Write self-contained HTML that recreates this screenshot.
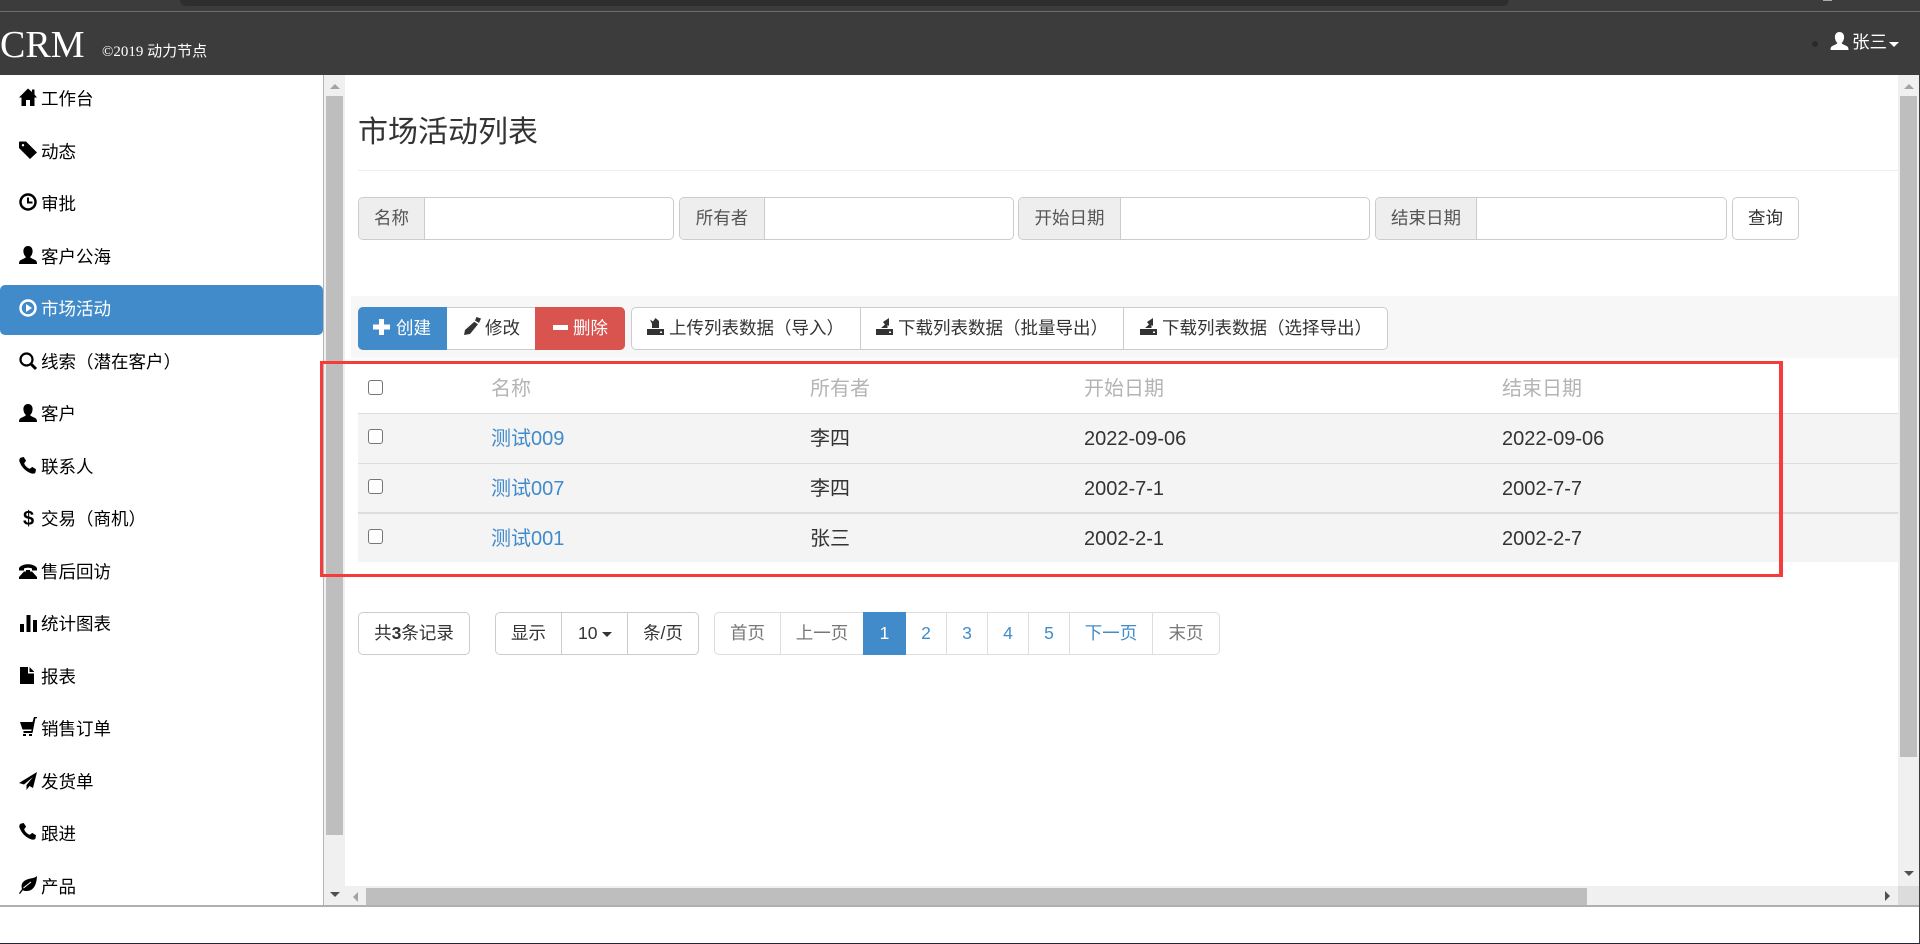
<!DOCTYPE html>
<html lang="zh"><head><meta charset="utf-8"><title>市场活动列表</title>
<style>
html,body{margin:0;padding:0;width:1920px;height:944px;overflow:hidden;background:#fff}
body{position:relative;font-family:"Liberation Sans","Noto Sans CJK SC",sans-serif;font-size:17.5px;color:#333}
.a{position:absolute;box-sizing:border-box}
.t{position:absolute;white-space:nowrap;line-height:24px;height:24px}
.n{position:absolute;left:41px;color:#000;white-space:nowrap;line-height:24px;height:24px}
svg{position:absolute;display:block;overflow:visible}
.g{position:absolute;box-sizing:border-box;border:1px solid #ccc;border-radius:5px;background:#fff}
.ad{position:absolute;left:0;top:0;bottom:0;background:#eee;border-right:1px solid #ccc;border-radius:4px 0 0 4px;color:#555;text-align:center;line-height:41px}
.d{position:absolute;top:0;bottom:0;width:1px;background:#ccc}
.th{position:absolute;font-size:20px;color:#b4b4b4;line-height:26px;white-space:nowrap}
.td{position:absolute;font-size:20px;color:#333;line-height:26px;white-space:nowrap}
.lk{color:#428bca}
.cb{position:absolute;left:368px;width:15px;height:15px;box-sizing:border-box;border:1.5px solid #767676;border-radius:3px;background:#fff}
.p{position:absolute;top:0;height:41px;line-height:41px;text-align:center;color:#777;box-sizing:border-box}
.b{color:#428bca}
</style></head><body>
<svg width="0" height="0" style="position:absolute"><defs>
<symbol id="user" viewBox="0 0 18 18"><path d="M9 0c3 0 4.600 2.300 4.600 5 0 2.500-1 4.700-2.500 6 .3 1 3 2 5 3 1.500.8 1.900 2 1.900 4H0c0-2 .4-3.200 1.900-4 2-1 4.700-2 5-3C5.400 9.700 4.400 7.500 4.400 5 4.400 2.300 6 0 9 0z"/></symbol>
<symbol id="phone" viewBox="0 0 18 18"><path d="M2 .6 5 0l2.500 4-2 2.500c.5 2.500 3.500 5.500 6 6l2.500-2 4 2.500-.5 3c-.5 2-3.500 2-5.500 1C7 15 3 11 1 6 0 4 0 1.600 2 .6z"/></symbol>
<symbol id="imp" viewBox="0 0 17 17"><path d="M0 11h17v6H0zM5 10V6L3 1.500l3 2L8.500 0 12 3v7z"/><path fill="#fff" d="M13 13.500h2v1.500h-2z"/></symbol>
<symbol id="exp" viewBox="0 0 17 17"><path d="M0 11h17v6H0zM5 10l4-3.500L7 4l6-4v8l-1.500-1v3z"/><path fill="#fff" d="M13 13.500h2v1.500h-2z"/></symbol>
</defs></svg>

<!-- header -->
<div class="a" style="left:0;top:0;width:1920px;height:75px;background:#3c3c3c"></div>
<div class="a" style="left:180px;top:0;width:1329px;height:6px;background:#2e2e2e;border-radius:0 0 6px 6px"></div>
<div class="a" style="left:1823px;top:0;width:9px;height:1px;background:#aaa"></div>
<div class="a" style="left:0;top:11px;width:1920px;height:1px;background:#6e6e6e"></div>
<div class="t" style="left:0;top:24px;height:42px;line-height:42px;font-family:'Liberation Serif','Noto Serif CJK SC',serif;font-size:38px;color:#fff">CRM</div>
<div class="t" style="left:102px;top:40px;font-family:'Liberation Serif','Noto Sans CJK SC',serif;font-size:15px;color:#fff">©2019 动力节点</div>
<div class="a" style="left:1812px;top:41px;width:6px;height:6px;border-radius:50%;background:#2a2a2a"></div>
<svg style="left:1830px;top:32px" width="19" height="18" fill="#fff"><use href="#user"/></svg>
<div class="t" style="left:1852px;top:30px;color:#fff">张三</div>
<div class="a" style="left:1889px;top:42px;width:0;height:0;border:5px solid transparent;border-top:5px solid #fff;border-bottom:0"></div>

<!-- sidebar -->
<div class="a" style="left:0;top:285px;width:323px;height:50px;background:#428bca;border-radius:5px"></div>
<svg style="left:19px;top:88px" width="18" height="18" viewBox="0 0 18 18"><path d="M9 0.500 13 4V1.500h2.500V6.500L18 9.500H15.500V18H11V12H7V18H2.500V9.500H0z"/></svg>
<div class="n" style="top:87px">工作台</div>
<svg style="left:19px;top:141px" width="18" height="18" viewBox="0 0 18 18"><path fill-rule="evenodd" d="M1 0.500H7L18 11.500 11 18 0 7V1.500A1 1 0 0 1 1 .5zM4 3a1.200 1.200 0 1 0 .01 0z"/></svg>
<div class="n" style="top:140px">动态</div>
<svg style="left:19px;top:193px" width="18" height="18" viewBox="0 0 18 18"><circle cx="9" cy="9" r="7.500" fill="none" stroke="#000" stroke-width="2.500"/><path d="M9 4.500V9.500H13.500" fill="none" stroke="#000" stroke-width="2"/></svg>
<div class="n" style="top:192px">审批</div>
<svg style="left:19px;top:246px" width="18" height="18"><use href="#user"/></svg>
<div class="n" style="top:245px">客户公海</div>
<svg style="left:19px;top:299px" width="18" height="18" viewBox="0 0 18 18"><circle cx="9" cy="9" r="7.500" fill="none" stroke="#fff" stroke-width="2.500"/><path d="M7 5V13L13 9z" fill="#fff"/></svg>
<div class="n" style="top:297px;color:#fff">市场活动</div>
<svg style="left:19px;top:352px" width="18" height="18" viewBox="0 0 18 18"><circle cx="7.500" cy="7.500" r="6" fill="none" stroke="#000" stroke-width="2.200"/><path d="M12 12L17 17" stroke="#000" stroke-width="3"/></svg>
<div class="n" style="top:350px">线索（潜在客户）</div>
<svg style="left:19px;top:404px" width="18" height="18"><use href="#user"/></svg>
<div class="n" style="top:402px">客户</div>
<svg style="left:19px;top:457px" width="17" height="17"><use href="#phone"/></svg>
<div class="n" style="top:455px">联系人</div>
<div class="t" style="left:23px;top:507px;color:#000;font-size:20px;font-weight:700">$</div>
<div class="n" style="top:507px">交易（商机）</div>
<svg style="left:19px;top:563px" width="18" height="16" viewBox="0 0 18 16"><path d="M0 5C3 0 15 0 18 5V7.500H13V5.500C11 4.500 7 4.500 5 5.500V7.500H0zM5 8.500H7V7H11V8.500H13L18 14V16H0V14z"/></svg>
<div class="n" style="top:560px">售后回访</div>
<svg style="left:20px;top:615px" width="17" height="17" viewBox="0 0 17 17"><path d="M0 9H4V17H0zM6.500 0H10.500V17H6.500zM13 5H17V17H13z"/></svg>
<div class="n" style="top:612px">统计图表</div>
<svg style="left:20px;top:667px" width="14" height="17" viewBox="0 0 14 17"><path d="M0 0H8V6.500H14V17H0zM9.500 0L14 4.500V5H9.500z"/></svg>
<div class="n" style="top:665px">报表</div>
<svg style="left:20px;top:717px" width="17" height="19" viewBox="0 0 17 19"><path d="M0 5H12.500L14 0H17V1.200H15.400L12.500 16H3.500V14H11.300L11.700 12.500H2.500zM3 17h3v2H3zM9 17h3v2H9z"/></svg>
<div class="n" style="top:717px">销售订单</div>
<svg style="left:19px;top:772px" width="18" height="18" viewBox="0 0 18 18"><path d="M18 0 0 11l5 1.500L14 5 7.500 13v5l3-4 3.500 2z"/></svg>
<div class="n" style="top:770px">发货单</div>
<svg style="left:19px;top:823px" width="17" height="17"><use href="#phone"/></svg>
<div class="n" style="top:822px">跟进</div>
<svg style="left:19px;top:876px" width="18" height="18" viewBox="0 0 18 18"><path d="M18 0C17.500 10 14 15 7.500 15 5.500 15 4.500 14.600 3.800 14.200L1 18 0 17.300 3 13C1.800 9 3 5.500 8 3.500 12 2 15.500 2.500 18 0z"/><path d="M4.500 12 12 6" stroke="#fff" stroke-width="1"/></svg>
<div class="n" style="top:875px">产品</div>
<div class="a" style="left:323px;top:75px;width:1px;height:830px;background:#b5b5b5"></div>

<!-- left scrollbar -->
<div class="a" style="left:324px;top:75px;width:21px;height:830px;background:#f0f0f0"></div>
<div class="a" style="left:326px;top:96px;width:17px;height:739px;background:#bebebe"></div>
<div class="a" style="left:330px;top:84px;width:0;height:0;border:5px solid transparent;border-bottom:5px solid #a3a3a3;border-top:0"></div>
<div class="a" style="left:330px;top:892px;width:0;height:0;border:5px solid transparent;border-top:5px solid #505050;border-bottom:0"></div>

<!-- title -->
<div class="t" style="left:358px;top:112px;height:42px;line-height:42px;font-size:30px;color:#333">市场活动列表</div>
<div class="a" style="left:358px;top:170px;width:1540px;height:1px;background:#eee"></div>

<!-- search -->
<div class="g" style="left:358px;top:197px;width:316px;height:43px"><div class="ad" style="width:65px">名称</div></div>
<div class="g" style="left:679px;top:197px;width:335px;height:43px"><div class="ad" style="width:84px">所有者</div></div>
<div class="g" style="left:1018px;top:197px;width:352px;height:43px"><div class="ad" style="width:101px">开始日期</div></div>
<div class="g" style="left:1375px;top:197px;width:352px;height:43px"><div class="ad" style="width:100px">结束日期</div></div>
<div class="g" style="left:1732px;top:197px;width:67px;height:43px;text-align:center;line-height:41px">查询</div>

<!-- toolbar -->
<div class="a" style="left:351px;top:296px;width:1547px;height:62px;background:#f7f7f7"></div>
<div class="g" style="left:358px;top:307px;width:267px;height:43px"></div>
<div class="a" style="left:358px;top:307px;width:89px;height:43px;background:#428bca;border-radius:5px 0 0 5px"></div>
<div class="a" style="left:535px;top:307px;width:90px;height:43px;background:#d9534f;border-radius:0 5px 5px 0"></div>
<svg style="left:373px;top:319px" width="17" height="16" viewBox="0 0 17 16"><path fill="#fff" d="M6 0h5v5.500h6v5h-6V16H6v-5.500H0v-5h6z"/></svg>
<div class="t" style="left:396px;top:316px;color:#fff">创建</div>
<svg style="left:463px;top:317px" width="18" height="18" viewBox="0 0 18 18"><path fill="#333" d="M13.500 0 18 1.500 16 6 12 3.500zM11.300 4.800 15 7.200 7 17 1 18 2 13z"/></svg>
<div class="t" style="left:485px;top:316px">修改</div>
<div class="a" style="left:553px;top:325px;width:15px;height:5px;background:#fff"></div>
<div class="t" style="left:573px;top:316px;color:#fff">删除</div>
<div class="g" style="left:631px;top:307px;width:757px;height:43px"></div>
<div class="a" style="left:860px;top:307px;width:1px;height:43px;background:#ccc"></div>
<div class="a" style="left:1123px;top:307px;width:1px;height:43px;background:#ccc"></div>
<svg style="left:647px;top:318px" width="17" height="17" fill="#333"><use href="#imp"/></svg>
<div class="t" style="left:669px;top:316px">上传列表数据（导入）</div>
<svg style="left:876px;top:318px" width="17" height="17" fill="#333"><use href="#exp"/></svg>
<div class="t" style="left:898px;top:316px">下载列表数据（批量导出）</div>
<svg style="left:1140px;top:318px" width="17" height="17" fill="#333"><use href="#exp"/></svg>
<div class="t" style="left:1162px;top:316px">下载列表数据（选择导出）</div>

<!-- table -->
<div class="a" style="left:358px;top:413px;width:1540px;height:149px;background:#f4f4f4"></div>
<div class="a" style="left:358px;top:413px;width:1540px;height:1px;background:#ddd"></div>
<div class="a" style="left:358px;top:463px;width:1540px;height:1px;background:#ddd"></div>
<div class="a" style="left:358px;top:512px;width:1540px;height:2px;background:#ddd"></div>
<div class="cb" style="top:380px"></div><div class="cb" style="top:429px"></div><div class="cb" style="top:479px"></div><div class="cb" style="top:529px"></div>
<div class="th" style="left:491px;top:376px">名称</div><div class="th" style="left:810px;top:376px">所有者</div><div class="th" style="left:1084px;top:376px">开始日期</div><div class="th" style="left:1502px;top:376px">结束日期</div>
<div class="td lk" style="left:491px;top:426px">测试009</div><div class="td" style="left:810px;top:426px">李四</div><div class="td" style="left:1084px;top:426px">2022-09-06</div><div class="td" style="left:1502px;top:426px">2022-09-06</div>
<div class="td lk" style="left:491px;top:476px">测试007</div><div class="td" style="left:810px;top:476px">李四</div><div class="td" style="left:1084px;top:476px">2002-7-1</div><div class="td" style="left:1502px;top:476px">2002-7-7</div>
<div class="td lk" style="left:491px;top:526px">测试001</div><div class="td" style="left:810px;top:526px">张三</div><div class="td" style="left:1084px;top:526px">2002-2-1</div><div class="td" style="left:1502px;top:526px">2002-2-7</div>

<!-- pagination -->
<div class="g" style="left:358px;top:612px;width:112px;height:43px;text-align:center;line-height:41px">共<b>3</b>条记录</div>
<div class="g" style="left:495px;top:612px;width:204px;height:43px">
<div class="p" style="left:0;width:65px;color:#333">显示</div><div class="d" style="left:65px"></div>
<div class="p" style="left:66px;width:66px;color:#333;text-align:left;padding-left:16px">10</div><div class="d" style="left:131px"></div>
<div class="a" style="left:106px;top:19px;width:0;height:0;border:5px solid transparent;border-top:5px solid #333;border-bottom:0"></div>
<div class="p" style="left:132px;width:70px;color:#333">条/页</div></div>
<div class="g" style="left:714px;top:612px;width:506px;height:43px;border-color:#ddd">
<div class="p" style="left:0;width:65px">首页</div><div class="d" style="left:65px;background:#ddd"></div>
<div class="p" style="left:66px;width:82px">上一页</div>
<div class="a" style="left:148px;top:-1px;width:43px;height:43px;background:#428bca;color:#fff;text-align:center;line-height:43px">1</div>
<div class="p b" style="left:191px;width:40px">2</div><div class="d" style="left:231px;background:#ddd"></div>
<div class="p b" style="left:232px;width:40px">3</div><div class="d" style="left:272px;background:#ddd"></div>
<div class="p b" style="left:273px;width:40px">4</div><div class="d" style="left:313px;background:#ddd"></div>
<div class="p b" style="left:314px;width:40px">5</div><div class="d" style="left:354px;background:#ddd"></div>
<div class="p b" style="left:355px;width:82px">下一页</div><div class="d" style="left:437px;background:#ddd"></div>
<div class="p" style="left:438px;width:66px">末页</div></div>

<!-- right scrollbar -->
<div class="a" style="left:1898px;top:75px;width:21px;height:811px;background:#f0f0f0"></div>
<div class="a" style="left:1900px;top:96px;width:17px;height:661px;background:#bebebe"></div>
<div class="a" style="left:1904px;top:84px;width:0;height:0;border:5px solid transparent;border-bottom:5px solid #a3a3a3;border-top:0"></div>
<div class="a" style="left:1904px;top:871px;width:0;height:0;border:5px solid transparent;border-top:5px solid #505050;border-bottom:0"></div>
<!-- bottom scrollbar -->
<div class="a" style="left:345px;top:886px;width:1553px;height:19px;background:#f0f0f0"></div>
<div class="a" style="left:366px;top:888px;width:1221px;height:17px;background:#bebebe"></div>
<div class="a" style="left:353px;top:892px;width:0;height:0;border:5px solid transparent;border-right:5px solid #a3a3a3;border-left:0"></div>
<div class="a" style="left:1885px;top:891px;width:0;height:0;border:5px solid transparent;border-left:5px solid #505050;border-right:0"></div>
<div class="a" style="left:1898px;top:886px;width:21px;height:19px;background:#dcdcdc"></div>
<div class="a" style="left:1919px;top:12px;width:1px;height:932px;background:#3c3c3c"></div>
<div class="a" style="left:0;top:905px;width:1919px;height:2px;background:#b0b0b0"></div>
<div class="a" style="left:0;top:943px;width:1920px;height:1px;background:#22263a"></div>

<!-- red box -->
<div class="a" style="left:320px;top:361px;width:1463px;height:216px;border:3px solid #f73b3b;border-right-width:4px"></div>
</body></html>
